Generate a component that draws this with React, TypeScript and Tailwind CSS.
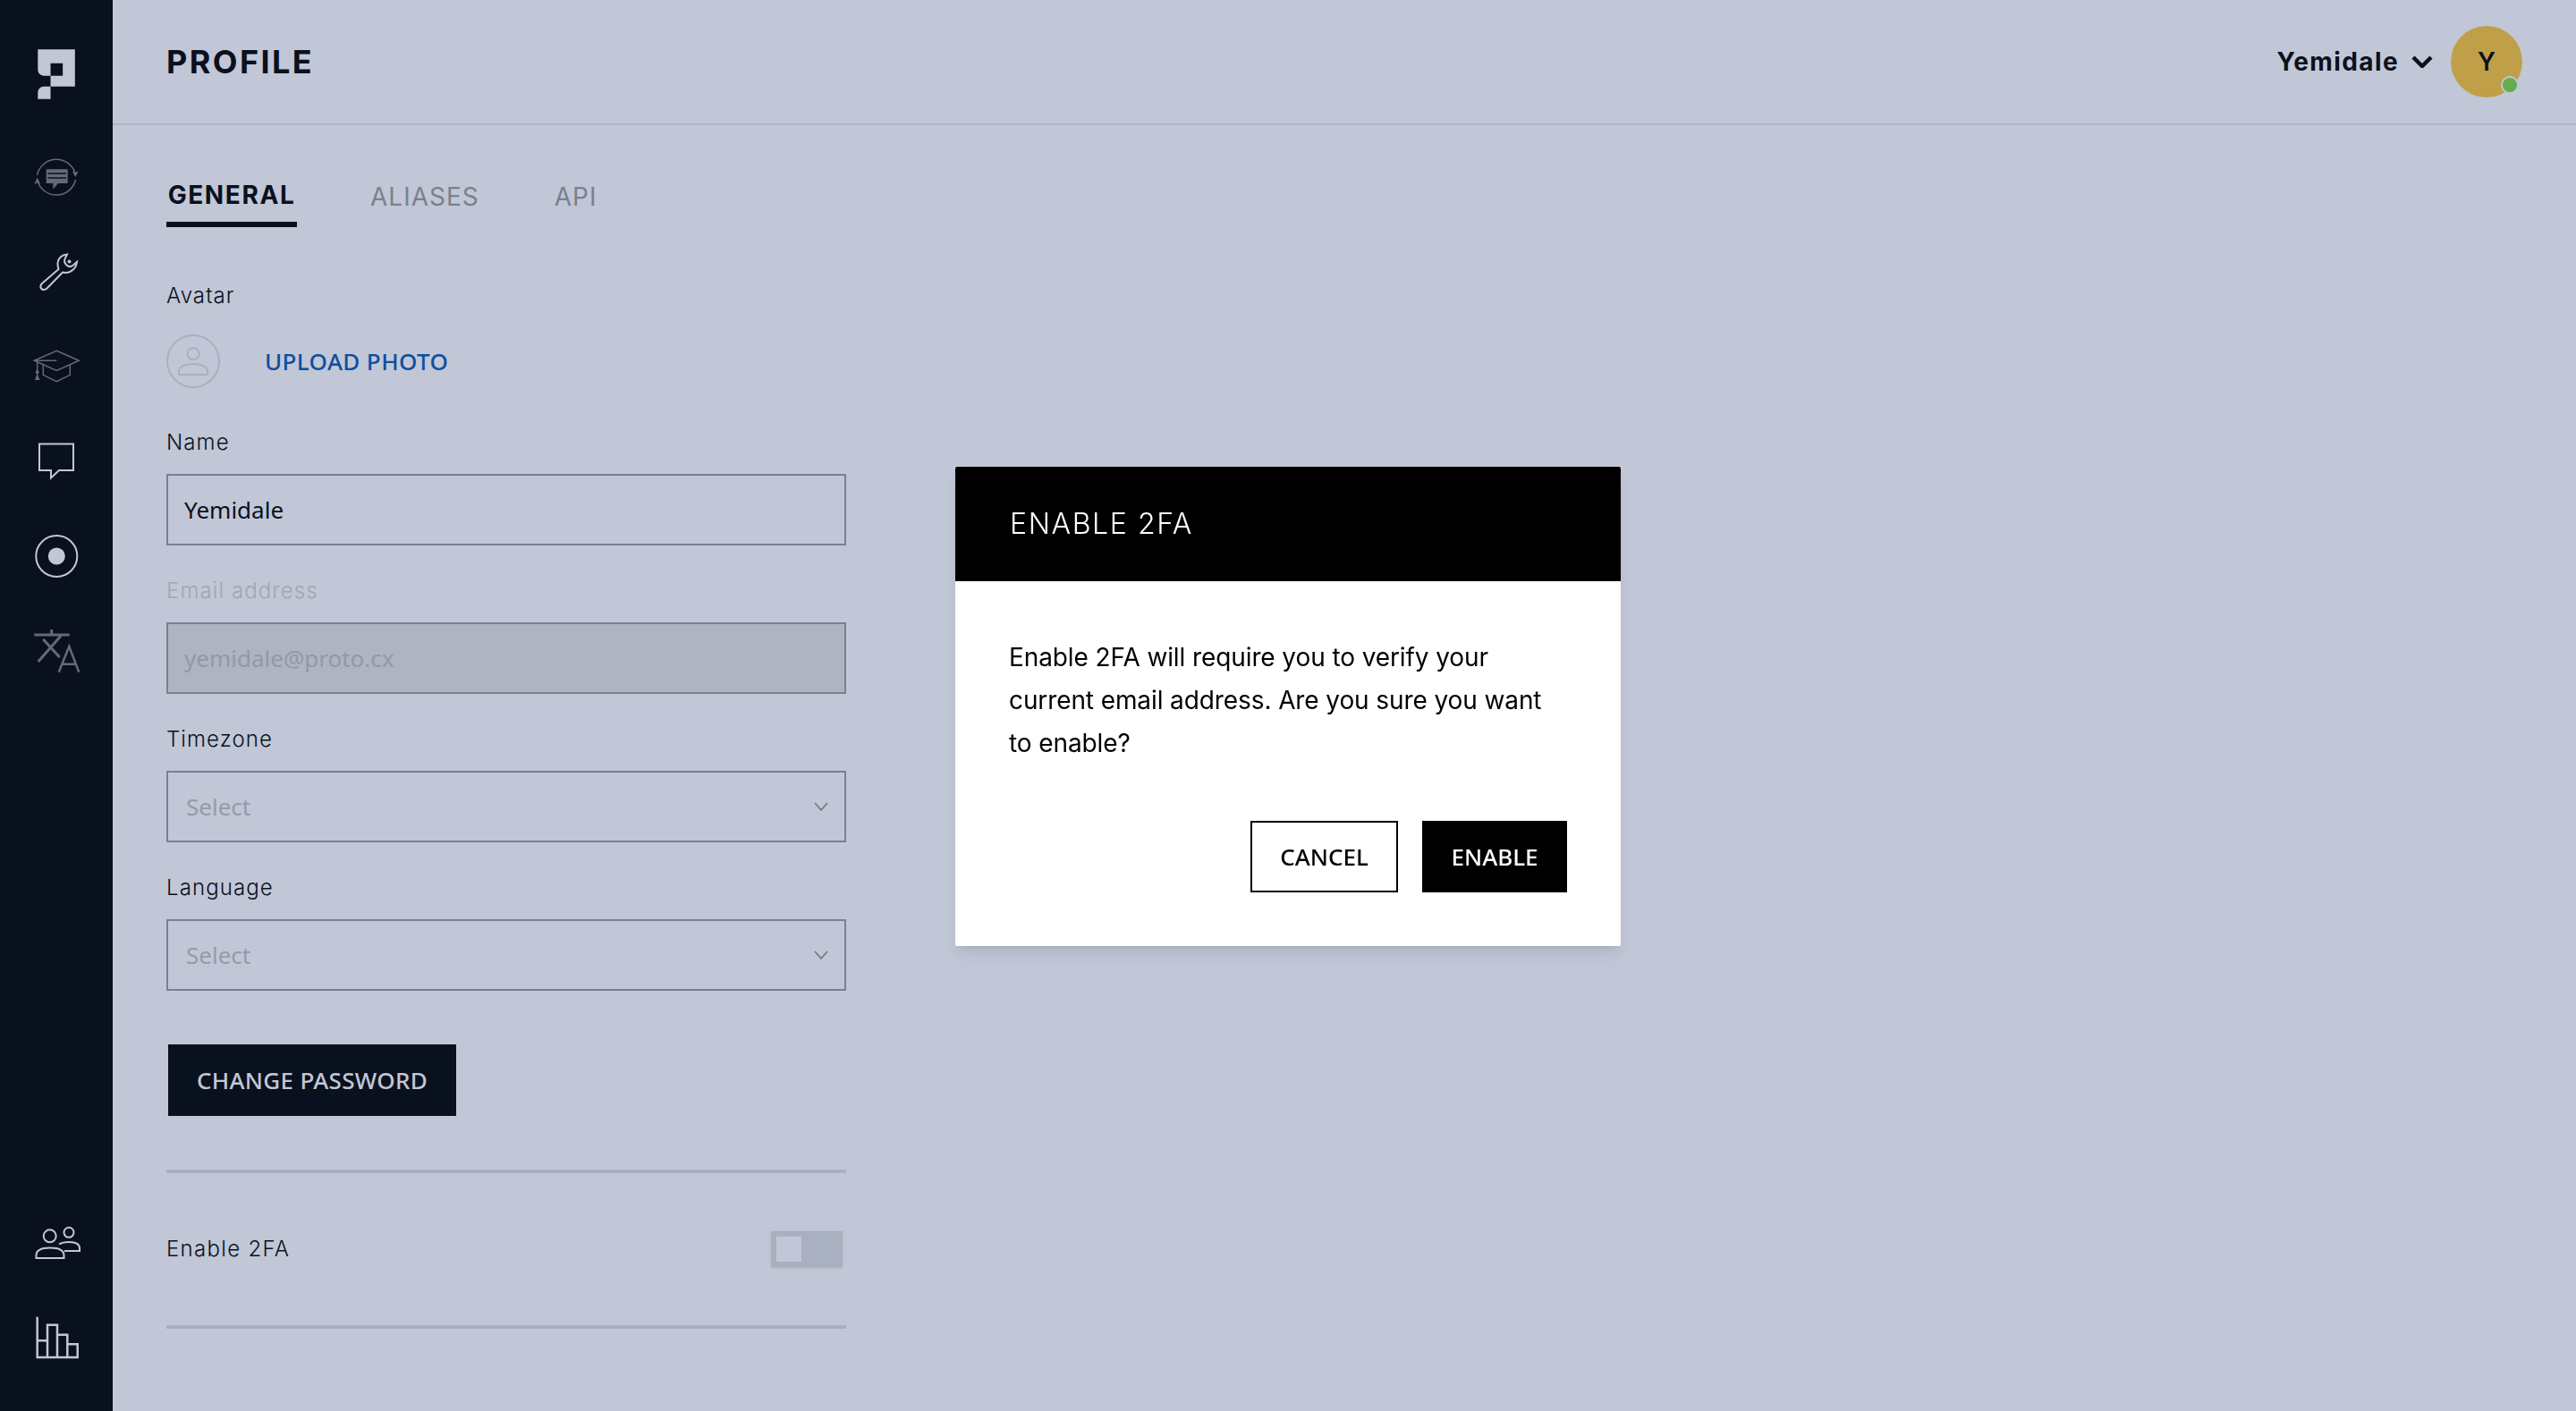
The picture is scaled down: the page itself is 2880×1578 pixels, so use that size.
const MONT = "font-['Inter',sans-serif]"
const NOTO = "font-['Noto_Sans',sans-serif]"

function Logo() {
  return (
    <svg width="42" height="56" viewBox="41 55 42.5 56" className="text-[#c1c7d6]">
      <path
        fill="currentColor"
        fillRule="evenodd"
        d="M41.3 55H83.3V97H55.7V84.7H48C44.3 84.7 41.3 81.7 41.3 78ZM55.7 70.7V84.7H69.5V70.7Z"
      />
      <path fill="currentColor" d="M55.7 97V111H41.3V104C41.3 100 44.3 97 48 97Z" />
    </svg>
  )
}

function NavIcon({ children, dim }: { children: React.ReactNode; dim?: boolean }) {
  return (
    <div className={`flex h-[106px] items-center justify-center ${dim ? "text-[#646a78]" : "text-[#c1c7d6]"}`}>
      <svg width="60" height="60" viewBox="0 0 60 60" fill="none" stroke="currentColor" strokeWidth="2">
        {children}
      </svg>
    </div>
  )
}

function Sidebar() {
  return (
    <aside className="flex h-full w-[126px] shrink-0 flex-col justify-between bg-[#0a111e] pb-[29px]">
      <div>
        <div className="flex h-[145px] items-start justify-center pt-[55px]">
          <Logo />
        </div>
        <NavIcon dim>
          <path strokeWidth="1.5" d="M8.5 28A22 22 0 0 1 51 25.5" />
          <path strokeWidth="1.5" d="M9 34.5A22 22 0 0 0 51.5 33" />
          <path fill="currentColor" stroke="none" d="M51.3 30L47.8 23.5L51.2 25L54.8 23.5Z" />
          <path fill="currentColor" stroke="none" d="M8.7 30.5L5.3 38L8.8 36.2L12.3 38Z" />
          <path fill="currentColor" stroke="none" d="M18.7 21.3H42.7V37H32L26.3 43.7V37H18.7Z" />
          <path stroke="#0a111e" strokeWidth="1.5" d="M20.5 26H41M20.5 31H41" />
        </NavIcon>
        <NavIcon>
          <path d="M42 10.5C36 11 32 15 31.5 20C31.3 23 32 25.5 32.5 27L14 43C11 46 12.5 50 16 50C17.5 50 18.5 49.5 19.5 48.5L37 30.5C39 31 42 31.2 45 30C49.5 28 52.5 24 53 19L49 22.5C46.5 24.5 43.5 24.5 41.5 22.5C39 20 38.5 17 40 14.5Z" />
          <circle cx="44.5" cy="18.5" r="2" fill="currentColor" stroke="none" />
        </NavIcon>
        <NavIcon dim>
          <path strokeWidth="1.5" d="M30.3 12.3L55.3 23.3L30.3 34.4L5.3 23.3Z" />
          <path strokeWidth="1.5" d="M5.3 23.3H30.3M15.3 28.3V39.3L30.3 46.7L45.3 39.3V28.3M8.7 23.3V36" />
          <circle cx="8.7" cy="36.3" r="2" fill="currentColor" stroke="none" />
          <path fill="currentColor" stroke="none" d="M8.7 37L11.4 45H6Z" />
        </NavIcon>
        <NavIcon>
          <path d="M11 10.5H49V40H33L24 48.5V40H11Z" />
        </NavIcon>
        <NavIcon>
          <circle cx="30.3" cy="30" r="23" />
          <circle cx="30.3" cy="30" r="9.5" fill="currentColor" stroke="none" />
        </NavIcon>
        <NavIcon dim>
          <path strokeWidth="3" d="M5.3 12H44.7M24.7 6V12M36 12L9.7 42M15.3 17L33.7 37" />
          <path strokeWidth="2.5" d="M32.7 53.7L44.3 25L55.3 53.7M36 44.7H52.5" />
        </NavIcon>
      </div>
      <div>
        <NavIcon>
          <circle cx="22.7" cy="22.3" r="7" />
          <path d="M7.5 47V44C7.5 38 13 35.5 23 35.5C33 35.5 38.5 38 38.5 44V47Z" />
          <circle cx="44" cy="18.3" r="5.5" />
          <path d="M33 31.5C36 29.8 40 29 44 29C52 29 56 31.5 56 36V39H39" />
        </NavIcon>
        <NavIcon>
          <path strokeWidth="2.5" d="M8.7 6.7V52H53.7V37.3H42.3V52M8.7 33.3H20V52M20 33.3V15.7H31V52M31 26.7H42.3V37.3" />
        </NavIcon>
      </div>
    </aside>
  )
}

function Label({ children, disabled }: { children: React.ReactNode; disabled?: boolean }) {
  return (
    <div
      className={`mb-[18px] h-[34px] text-[24px] leading-[34px] font-light tracking-[1.1px] ${MONT} ${
        disabled ? "text-[#a0a6b5]" : "text-[#0a111e]"
      }`}
    >
      {children}
    </div>
  )
}

function SelectField({ label }: { label: string }) {
  return (
    <div className="mb-[34px]">
      <Label>{label}</Label>
      <div className="flex h-[80px] items-center justify-between border-2 border-[#7a8090] pr-[18px] pl-[20px]">
        <span className={`text-[26px] text-[#959baa] ${NOTO}`}>Select</span>
        <svg width="16" height="10" viewBox="0 0 16 10" fill="none" stroke="#6f7584" strokeWidth="1.6">
          <path d="M1 1L8 9L15 1" />
        </svg>
      </div>
    </div>
  )
}

export default function App() {
  return (
    <div className="flex h-screen w-full overflow-hidden bg-[#c1c7d6]">
      <Sidebar />

      <main className="flex-1">
        <header className="flex h-[140px] items-center justify-between border-b-2 border-[#b0b6c5] pr-[60px] pl-[60px]">
          <h1 className={`text-[36px] font-bold tracking-[2.4px] text-[#0a111e] ${MONT}`}>PROFILE</h1>
          <div className="flex items-center">
            <span className={`text-[28px] font-bold tracking-[1.4px] text-[#0a111e] ${MONT}`}>Yemidale</span>
            <svg width="24" height="14" viewBox="0 0 24 14" fill="none" stroke="#0a111e" strokeWidth="4.5" className="mr-[20px] ml-[14px]">
              <path d="M2 2L12 12L22 2" />
            </svg>
            <div className="relative flex h-[80px] w-[80px] items-center justify-center rounded-full bg-[#bfa048]">
              <span className={`text-[28px] font-semibold text-[#0a111e] ${MONT}`}>Y</span>
              <span className="absolute top-[56px] left-[56px] h-[20px] w-[20px] rounded-full border-2 border-[#c1c7d6] bg-[#65ad4c]" />
            </div>
          </div>
        </header>

        <div className="pl-[60px]">
          <nav className={`mt-[50px] flex h-[64px] text-[28px] ${MONT}`}>
            <div className="flex w-[146px] justify-center border-b-[6px] border-[#0a111e] pt-[7px] font-bold tracking-[1.6px] text-[#0a111e]">
              GENERAL
            </div>
            <div className="ml-[82px] pt-[9px] font-normal tracking-[1px] text-[#7a808e]">ALIASES</div>
            <div className="ml-[84px] pt-[9px] font-normal tracking-[1px] text-[#7a808e]">API</div>
          </nav>

          <form className="mt-[60px] w-[760px]">
            <Label>Avatar</Label>
            <div className="mt-[26px] mb-[44px] flex h-[60px] items-center">
              <svg width="60" height="60" viewBox="0 0 60 60" fill="none" stroke="#a9b0bf" strokeWidth="2">
                <circle cx="30" cy="30" r="29" />
                <circle cx="30" cy="21.7" r="6.5" />
                <path d="M14 45V41C14 36 21 33 30 33C39 33 46 36 46 41V45Z" />
              </svg>
              <span className={`ml-[50px] text-[26px] font-medium tracking-[0.4px] text-[#0f4f9f] ${NOTO}`}>UPLOAD PHOTO</span>
            </div>

            <div className="mb-[34px]">
              <Label>Name</Label>
              <div className={`flex h-[80px] items-center border-2 border-[#7a8090] pl-[18px] text-[26px] text-[#0a111e] ${NOTO}`}>
                Yemidale
              </div>
            </div>

            <div className="mb-[34px]">
              <Label disabled>Email address</Label>
              <div className={`flex h-[80px] items-center border-2 border-[#7a8090] bg-[#aeb4c2] pl-[18px] text-[26px] text-[#9299a8] ${NOTO}`}>
                yemidale@proto.cx
              </div>
            </div>

            <SelectField label="Timezone" />
            <SelectField label="Language" />

            <button
              type="button"
              className={`mt-[60px] ml-[2px] flex h-[80px] w-[322px] items-center justify-center bg-[#0a111e] text-[26px] font-medium tracking-[0.3px] text-[#c1c7d6] ${NOTO}`}
            >
              CHANGE PASSWORD
            </button>

            <div className="mt-[60px] flex h-[178px] items-center justify-between border-y-4 border-[#a9b0bf] pr-[4px]">
              <span className={`text-[24px] font-light tracking-[1.3px] text-[#0a111e] ${MONT}`}>Enable 2FA</span>
              <div className="flex h-[40px] w-[80px] items-center bg-[#a9b0bf] pl-[6px] shadow-sm">
                <div className="h-[28px] w-[28px] bg-[#c1c7d6]" />
              </div>
            </div>
          </form>
        </div>
      </main>

      <div className="fixed inset-0 flex items-center justify-center pt-[2px]">
        <div className="w-[744px] overflow-hidden rounded-[2px] bg-white shadow-lg">
          <div className={`flex h-[128px] items-center bg-black pl-[61px] text-[32px] font-light tracking-[1.6px] text-white ${MONT}`}>
            ENABLE 2FA
          </div>
          <div className="pt-[61px] pr-[60px] pb-[60px] pl-[60px]">
            <p className={`text-[28px] leading-[48px] tracking-[-0.1px] text-black ${MONT}`}>
              Enable 2FA will require you to verify your
              <br />
              current email address. Are you sure you want
              <br />
              to enable?
            </p>
            <div className={`mt-[63px] flex justify-end gap-[27px] text-[26px] font-medium ${NOTO}`}>
              <button type="button" className="h-[80px] w-[165px] border-2 border-black text-black">
                CANCEL
              </button>
              <button type="button" className="h-[80px] w-[162px] bg-black text-white">
                ENABLE
              </button>
            </div>
          </div>
        </div>
      </div>
    </div>
  )
}
